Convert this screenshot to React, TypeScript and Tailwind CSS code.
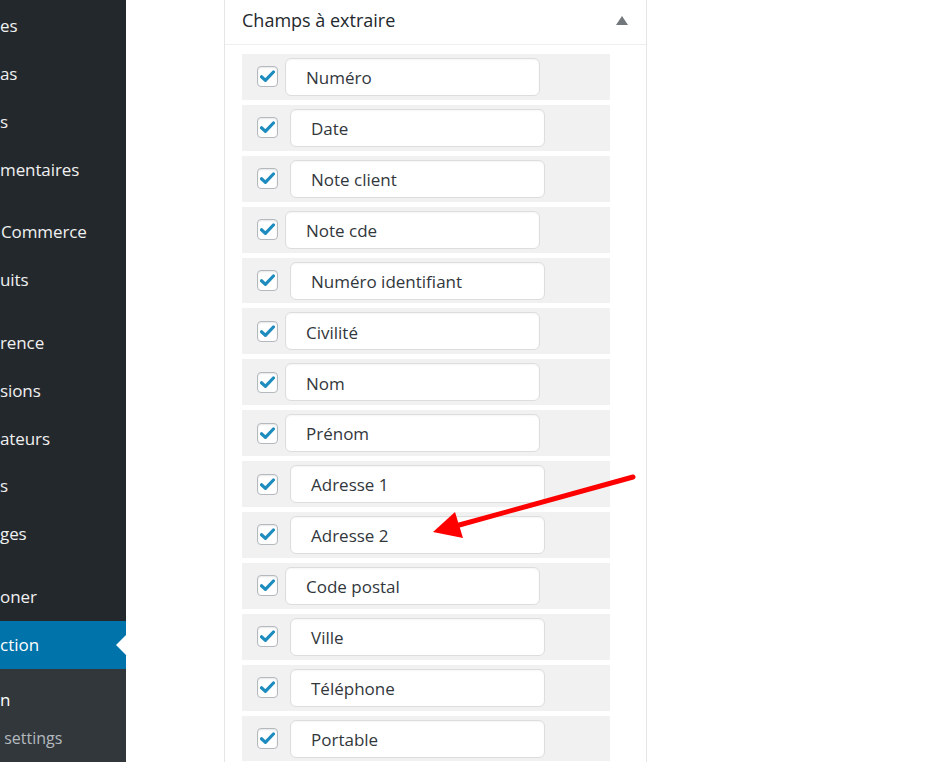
import React from "react";

// sidebar fragments: text, vertical gap before (separator)
const menu: { label: string; sep?: boolean; pl?: number }[] = [
  { label: "es" },
  { label: "as" },
  { label: "s" },
  { label: "mentaires" },
  { label: "Commerce", sep: true, pl: 1 },
  { label: "uits" },
  { label: "rence", sep: true },
  { label: "sions" },
  { label: "ateurs" },
  { label: "s" },
  { label: "ges" },
  { label: "oner", sep: true },
];

const fields: { name: string; shift: boolean }[] = [
  { name: "Numéro", shift: false },
  { name: "Date", shift: true },
  { name: "Note client", shift: true },
  { name: "Note cde", shift: false },
  { name: "Numéro identifiant", shift: true },
  { name: "Civilité", shift: false },
  { name: "Nom", shift: false },
  { name: "Prénom", shift: false },
  { name: "Adresse 1", shift: true },
  { name: "Adresse 2", shift: true },
  { name: "Code postal", shift: false },
  { name: "Ville", shift: true },
  { name: "Téléphone", shift: true },
  { name: "Portable", shift: true },
];

function Checkbox() {
  return (
    <div className="flex h-[21px] w-[21px] shrink-0 items-center justify-center rounded-[4px] border border-[#b4b9be] bg-white shadow-[inset_0_1px_2px_rgba(0,0,0,0.1)]">
      <svg width="15" height="13" viewBox="0 0 15 13">
        <path d="M1.5 6.8 L5.4 10.4 L13.4 2" fill="none" stroke="#1e8cbe" strokeWidth="3.2" strokeLinecap="round" strokeLinejoin="round" />
      </svg>
    </div>
  );
}

function Sidebar() {
  return (
    <aside className="flex w-[126px] shrink-0 flex-col bg-[#23282d] text-[17px] text-[#f0f0f0]">
      <div className="h-[2px]" />
      {menu.map((m, i) => (
        <React.Fragment key={i}>
          {m.sep && <div className="h-[15px]" />}
          <div className="flex h-[47.8px] items-center whitespace-nowrap tracking-[-0.1px]" style={{ paddingLeft: m.pl ?? 0 }}>
            {m.label}
          </div>
        </React.Fragment>
      ))}
      <div className="relative flex h-[48px] items-center bg-[#0073aa] text-white">
        ction
        <div className="absolute right-0 top-[14px] h-0 w-0 border-y-[10px] border-r-[10px] border-y-transparent border-r-white" />
      </div>
      <div className="flex-1 bg-[#32373c] pt-[12px]">
        <div className="flex h-[38px] items-center text-white">n</div>
        <div className="flex h-[38px] items-center whitespace-pre text-[16px] text-[#b4b9be]"> settings</div>
      </div>
    </aside>
  );
}

export default function App() {
  return (
    <div
      className="relative flex h-[762px] w-[945px] overflow-hidden bg-white"
      style={{ fontFamily: '"Open Sans", "Noto Sans", sans-serif' }}
    >
      <Sidebar />
      <main className="flex-1 pl-[98px]">
        <section className="h-full w-[423px] border-x border-[#e5e5e5] bg-white">
          <header className="flex h-[45px] items-center justify-between border-b border-[#eeeeee] pb-[4px] pl-[17px] pr-[18px]">
            <h2 className="text-[18px] text-[#23282d]">Champs à extraire</h2>
            <svg width="12" height="9" viewBox="0 0 12 9">
              <path d="M0 9 L6 0 L12 9 Z" fill="#72777c" />
            </svg>
          </header>
          <div className="flex flex-col gap-[5px] pl-[17px] pt-[9px]">
            {fields.map((f) => (
              <div key={f.name} className="flex h-[45.9px] w-[368px] items-center bg-[#f1f1f1] pl-[15px]">
                <Checkbox />
                <div
                  className={
                    "flex h-[38px] w-[255px] items-center rounded-[6px] border border-[#dddddd] bg-white pl-[20px] pt-[2px] text-[17px] text-[#32373c] shadow-[inset_0_1px_2px_rgba(0,0,0,0.04)] " +
                    (f.shift ? "ml-[12px]" : "ml-[7px]")
                  }
                >
                  {f.name}
                </div>
              </div>
            ))}
          </div>
        </section>
      </main>

      <svg className="pointer-events-none absolute inset-0" width="945" height="762" viewBox="0 0 945 762">
        <line x1="633" y1="477" x2="452" y2="527" stroke="#ff0000" strokeWidth="5" strokeLinecap="round" />
        <polygon points="433,532 455,512 463,538" fill="#ff0000" />
      </svg>
    </div>
  );
}
